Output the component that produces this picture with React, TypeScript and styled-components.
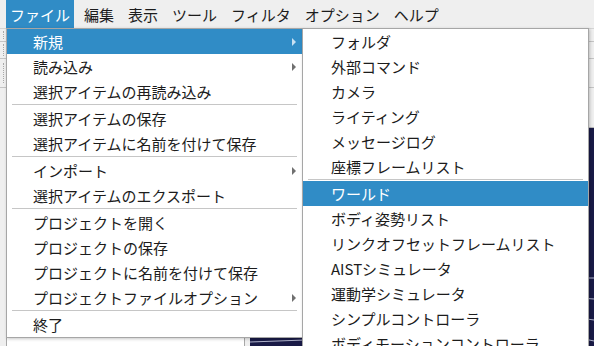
import React, { FC } from 'react'
import styled, { createGlobalStyle } from 'styled-components'

const GlobalStyle = createGlobalStyle`
    html, body {
        margin: 0;
        padding: 0;
    }
    body {
        font-family: "Noto Sans CJK JP", "Noto Sans", sans-serif;
        font-size: 15px;
        color: #1c1c1c;
    }
`

const Window = styled.div`
    position: relative;
    width: 594px;
    height: 346px;
    overflow: hidden;
    background: #efefef;
    display: flex;
    flex-direction: column;
`

const MenuBar = styled.div`
    height: 28px;
    flex: none;
    display: flex;
    align-items: stretch;
    gap: 6px;
    padding-left: 6px;
    background: #efefef;
`

const MenuBarItem = styled.div<{ $active?: boolean }>`
    display: flex;
    align-items: center;
    padding: 0 4px;
    background: ${props => props.$active ? '#308cc6' : 'transparent'};
    color: ${props => props.$active ? '#ffffff' : '#1c1c1c'};
`

const ToolArea = styled.div`
    height: 64px;
    flex: none;
    display: flex;
    flex-direction: column;
    border-top: 1px solid #d4d4d4;
`

const ToolRow = styled.div<{ $h: number }>`
    height: ${props => props.$h}px;
    flex: none;
    display: flex;
    align-items: center;
    border-bottom: 1px solid #c4c4c4;
`

const Handle = styled.div`
    width: 1px;
    height: 70%;
    margin-left: 3px;
    border-left: 1px dotted #a8a8a8;
`

const MainArea = styled.div`
    flex: 1;
    display: flex;
    padding: 4px 0 0 6px;
`

const LeftPanel = styled.div`
    width: 238px;
    background: #ffffff;
    border: 1px solid #a8a8a8;
`

const Splitter = styled.div`
    width: 5px;
    flex: none;
`

const RightColumn = styled.div`
    flex: 1;
    display: flex;
    flex-direction: column;
`

const TabBar = styled.div`
    height: 30px;
    flex: none;
    border-bottom: 1px solid #b8b8b8;
`

const SceneView = styled.div`
    flex: 1;
    background: #191a46;
    overflow: hidden;
`

const Menu = styled.div<{ $left: number; $width: number }>`
    position: absolute;
    top: 28px;
    left: ${props => props.$left}px;
    width: ${props => props.$width}px;
    box-sizing: border-box;
    background: #ffffff;
    border: 1px solid #a6a6a6;
    box-shadow: 1px 1px 3px rgba(0, 0, 0, 0.22);
    display: flex;
    flex-direction: column;
`

const Item = styled.div<{ $active?: boolean; $pad: number }>`
    height: 25px;
    flex: none;
    display: flex;
    align-items: center;
    justify-content: space-between;
    padding: 0 6px 0 ${props => props.$pad}px;
    white-space: nowrap;
    background: ${props => props.$active ? '#308cc6' : 'transparent'};
    color: ${props => props.$active ? '#ffffff' : '#1c1c1c'};
`

const Arrow = styled.span<{ $active?: boolean }>`
    width: 0;
    height: 0;
    border-top: 4px solid transparent;
    border-bottom: 4px solid transparent;
    border-left: 4px solid ${props => props.$active ? '#c8e0f2' : '#707070'};
`

const Separator = styled.div`
    height: 1px;
    flex: none;
    margin: 0 5px 1px;
    background: #c6c6c6;
`

type Entry = { label?: string; sub?: boolean; active?: boolean; sep?: boolean }

const fileMenu: Entry[] = [
    { label: '新規', sub: true, active: true },
    { label: '読み込み', sub: true },
    { label: '選択アイテムの再読み込み' },
    { sep: true },
    { label: '選択アイテムの保存' },
    { label: '選択アイテムに名前を付けて保存' },
    { sep: true },
    { label: 'インポート', sub: true },
    { label: '選択アイテムのエクスポート' },
    { sep: true },
    { label: 'プロジェクトを開く' },
    { label: 'プロジェクトの保存' },
    { label: 'プロジェクトに名前を付けて保存' },
    { label: 'プロジェクトファイルオプション', sub: true },
    { sep: true },
    { label: '終了' },
]

const newMenu: Entry[] = [
    { label: 'フォルダ' },
    { label: '外部コマンド' },
    { label: 'カメラ' },
    { label: 'ライティング' },
    { label: 'メッセージログ' },
    { label: '座標フレームリスト' },
    { sep: true },
    { label: 'ワールド', active: true },
    { label: 'ボディ姿勢リスト' },
    { label: 'リンクオフセットフレームリスト' },
    { label: 'AISTシミュレータ' },
    { label: '運動学シミュレータ' },
    { label: 'シンプルコントローラ' },
    { label: 'ボディモーションコントローラ' },
    { label: 'センサ可視化' },
]

const menuTitles = ['ファイル', '編集', '表示', 'ツール', 'フィルタ', 'オプション', 'ヘルプ']

const MenuList: FC<{ entries: Entry[]; left: number; width: number; pad: number }> = ({ entries, left, width, pad }) => (
    <Menu $left={left} $width={width}>
        {entries.map((e, i) =>
            e.sep ? (
                <Separator key={i} />
            ) : (
                <Item key={i} $active={e.active} $pad={pad}>
                    <span>{e.label}</span>
                    {e.sub && <Arrow $active={e.active} />}
                </Item>
            )
        )}
    </Menu>
)

const App: FC = () => {
    return (
        <Window>
            <GlobalStyle />
            <MenuBar>
                {menuTitles.map((t, i) => (
                    <MenuBarItem key={t} $active={i === 0}>{t}</MenuBarItem>
                ))}
            </MenuBar>
            <ToolArea>
                <ToolRow $h={12}><Handle /></ToolRow>
                <ToolRow $h={16}><Handle /></ToolRow>
                <ToolRow $h={28}><Handle /></ToolRow>
            </ToolArea>
            <MainArea>
                <LeftPanel />
                <Splitter />
                <RightColumn>
                    <TabBar />
                    <SceneView>
                        <svg width="344" height="240" viewBox="0 0 344 240">
                            <g stroke="#d8dcf0" strokeWidth="1" opacity="0.8">
                                <line x1="0" y1="208" x2="60" y2="204" />
                                <line x1="0" y1="214" x2="55" y2="212" />
                                <line x1="330" y1="150" x2="344" y2="150" />
                                <line x1="330" y1="170" x2="344" y2="171" />
                                <line x1="330" y1="190" x2="344" y2="192" />
                                <line x1="330" y1="210" x2="344" y2="213" />
                            </g>
                        </svg>
                    </SceneView>
                </RightColumn>
            </MainArea>
            <MenuList entries={fileMenu} left={6} width={297} pad={26} />
            <MenuList entries={newMenu} left={302} width={287} pad={28} />
        </Window>
    )
}

export default App
